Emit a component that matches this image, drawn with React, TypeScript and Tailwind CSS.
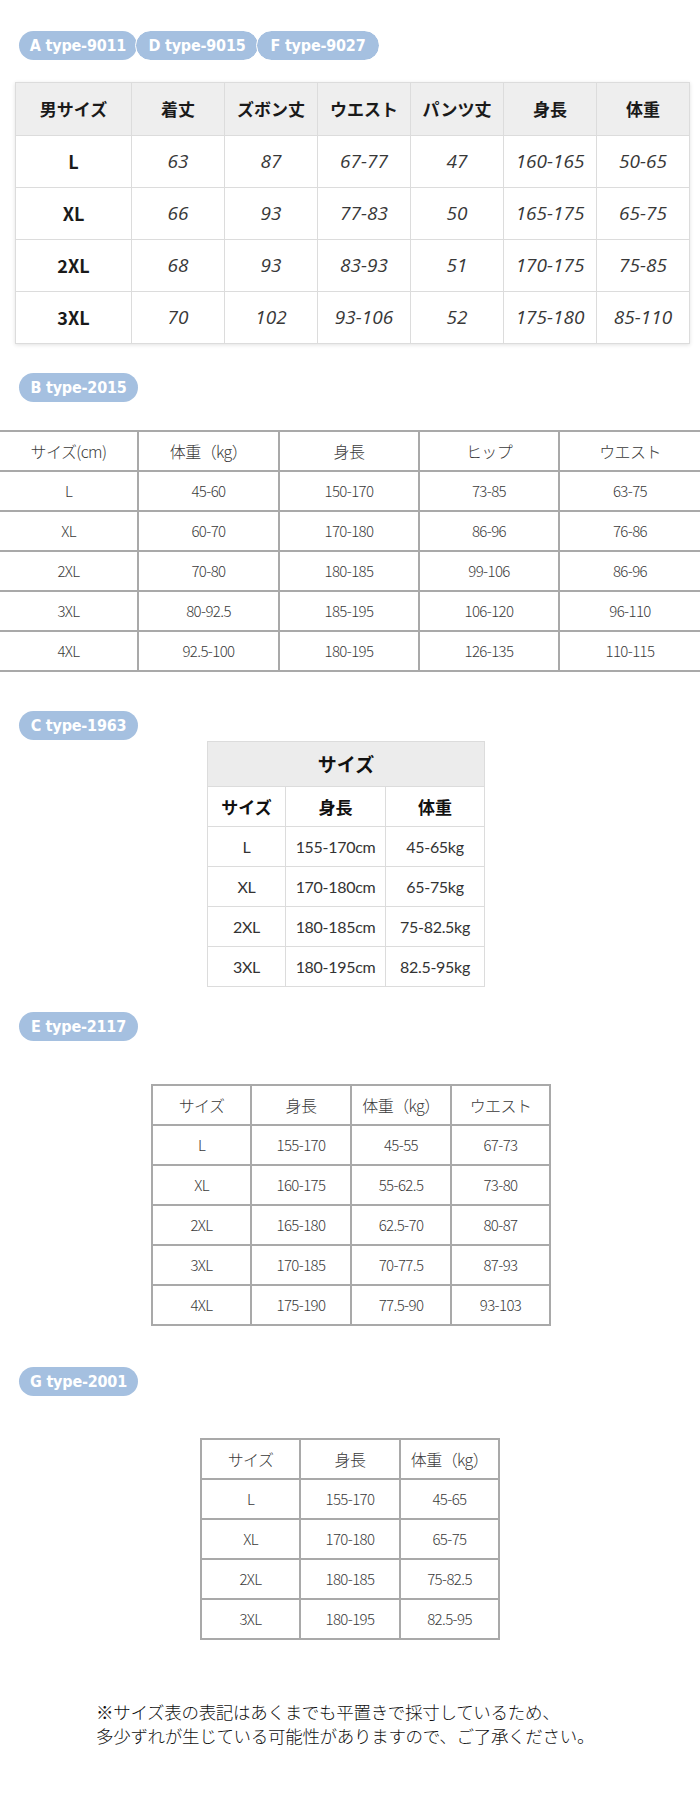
import React from 'react';

const jp = "font-['Noto_Sans_CJK_JP','Noto_Sans_CJK_SC',sans-serif]";

const Badge = ({ label, width, joined }: { label: string; width: string; joined?: boolean }) => (
  <span
    className={`relative inline-flex h-[29px] items-center justify-center rounded-full bg-[#a5c0e0] font-['DejaVu_Sans_Condensed','DejaVu_Sans',sans-serif] text-[16px] font-bold tracking-[-0.2px] text-white ${width} ${
      joined ? '-ml-[1px] outline outline-1 outline-white' : ''
    }`}
  >
    {label}
  </span>
);

const tableA = {
  head: ['男サイズ', '着丈', 'ズボン丈', 'ウエスト', 'パンツ丈', '身長', '体重'],
  rows: [
    ['L', '63', '87', '67-77', '47', '160-165', '50-65'],
    ['XL', '66', '93', '77-83', '50', '165-175', '65-75'],
    ['2XL', '68', '93', '83-93', '51', '170-175', '75-85'],
    ['3XL', '70', '102', '93-106', '52', '175-180', '85-110'],
  ],
};

const tableB = {
  head: ['サイズ(cm)', '体重（kg）', '身長', 'ヒップ', 'ウエスト'],
  rows: [
    ['L', '45-60', '150-170', '73-85', '63-75'],
    ['XL', '60-70', '170-180', '86-96', '76-86'],
    ['2XL', '70-80', '180-185', '99-106', '86-96'],
    ['3XL', '80-92.5', '185-195', '106-120', '96-110'],
    ['4XL', '92.5-100', '180-195', '126-135', '110-115'],
  ],
};

const tableC = [
  ['L', '155-170cm', '45-65kg'],
  ['XL', '170-180cm', '65-75kg'],
  ['2XL', '180-185cm', '75-82.5kg'],
  ['3XL', '180-195cm', '82.5-95kg'],
];

const tableE = {
  head: ['サイズ', '身長', '体重（kg）', 'ウエスト'],
  rows: [
    ['L', '155-170', '45-55', '67-73'],
    ['XL', '160-175', '55-62.5', '73-80'],
    ['2XL', '165-180', '62.5-70', '80-87'],
    ['3XL', '170-185', '70-77.5', '87-93'],
    ['4XL', '175-190', '77.5-90', '93-103'],
  ],
};

const tableG = {
  head: ['サイズ', '身長', '体重（kg）'],
  rows: [
    ['L', '155-170', '45-65'],
    ['XL', '170-180', '65-75'],
    ['2XL', '180-185', '75-82.5'],
    ['3XL', '180-195', '82.5-95'],
  ],
};

// thin grey-ruled tables (B, E, G)
const ThinCell = ({ children, head }: { children: React.ReactNode; head?: boolean }) => (
  <div
    className={`flex h-[38px] items-center justify-center bg-white ${jp} font-light text-[#3a3a3a] ${
      head ? 'text-[16px] tracking-[-0.6px]' : 'text-[15px] tracking-[-0.6px]'
    }`}
  >
    {children}
  </div>
);

const App = () => {
  return (
    <div className="w-[700px] overflow-hidden bg-white pb-[40px]">
      <div className="flex pl-[19px] pt-[31px]">
        <Badge label="A type-9011" width="w-[118px]" />
        <Badge label="D type-9015" width="w-[122px]" joined />
        <Badge label="F type-9027" width="w-[122px]" joined />
      </div>

      <div className="ml-[15px] mt-[22px] grid w-[675px] grid-cols-[115px_repeat(6,92px)] gap-px border border-[#dcdcdc] bg-[#dcdcdc] shadow-[0_1px_4px_rgba(0,0,0,0.12)]">
        {tableA.head.map(h => (
          <div key={h} className={`flex h-[52px] items-center justify-center bg-[#eeeeee] ${jp} text-[17px] font-bold text-[#1a1a1a]`}>
            {h}
          </div>
        ))}
        {tableA.rows.map(row =>
          row.map((c, i) => (
            <div
              key={row[0] + i}
              className={`flex h-[51px] items-center justify-center bg-white ${
                i === 0
                  ? `${jp} text-[18px] font-bold text-[#1a1a1a]`
                  : "font-['Open_Sans',sans-serif] text-[19px] italic text-[#383838]"
              }`}
            >
              {c}
            </div>
          ))
        )}
      </div>

      <div className="mt-[29px] pl-[19px]">
        <Badge label="B type-2015" width="w-[119px]" />
      </div>

      <div className="mt-[28px] grid w-[700px] grid-cols-[137px_139px_138px_138px_140px] gap-[2px] bg-[#a9a9a9] py-[2px]">
        {tableB.head.map(h => (
          <ThinCell key={h} head>
            {h}
          </ThinCell>
        ))}
        {tableB.rows.map(row => row.map((c, i) => <ThinCell key={row[0] + i}>{c}</ThinCell>))}
      </div>

      <div className="mt-[39px] pl-[19px]">
        <Badge label="C type-1963" width="w-[119px]" />
      </div>

      <div className="ml-[207px] mt-[1px] grid w-[278px] grid-cols-[77px_99px_98px] gap-px border border-[#dcdcdc] bg-[#dcdcdc]">
        <div className={`col-span-3 flex h-[44px] items-center justify-center bg-[#ececec] ${jp} text-[19px] font-bold text-[#111]`}>
          サイズ
        </div>
        {['サイズ', '身長', '体重'].map(h => (
          <div key={h} className={`flex h-[39px] items-center justify-center bg-white ${jp} text-[17px] font-bold text-[#111]`}>
            {h}
          </div>
        ))}
        {tableC.map(row =>
          row.map((c, i) => (
            <div
              key={row[0] + i}
              className="flex h-[39px] items-center justify-center bg-white font-['Lato',sans-serif] text-[16px] tracking-[-0.3px] text-[#333]"
            >
              {c}
            </div>
          ))
        )}
      </div>

      <div className="mt-[25px] pl-[19px]">
        <Badge label="E type-2117" width="w-[119px]" />
      </div>

      <div className="ml-[151px] mt-[43px] grid w-[400px] grid-cols-[97px_98px_98px_97px] gap-[2px] bg-[#a9a9a9] p-[2px]">
        {tableE.head.map(h => (
          <ThinCell key={h} head>
            {h}
          </ThinCell>
        ))}
        {tableE.rows.map(row => row.map((c, i) => <ThinCell key={row[0] + i}>{c}</ThinCell>))}
      </div>

      <div className="mt-[41px] pl-[19px]">
        <Badge label="G type-2001" width="w-[119px]" />
      </div>

      <div className="ml-[200px] mt-[42px] grid w-[300px] grid-cols-[97px_98px_97px] gap-[2px] bg-[#a9a9a9] p-[2px]">
        {tableG.head.map(h => (
          <ThinCell key={h} head>
            {h}
          </ThinCell>
        ))}
        {tableG.rows.map(row => row.map((c, i) => <ThinCell key={row[0] + i}>{c}</ThinCell>))}
      </div>

      <p className={`ml-[96px] mt-[60px] ${jp} text-[17.5px] font-light leading-[24px] tracking-[-0.3px] text-[#111]`}>
        ※サイズ表の表記はあくまでも平置きで採寸しているため、
        <br />
        多少ずれが生じている可能性がありますので、ご了承ください。
      </p>
    </div>
  );
};

export default App;
